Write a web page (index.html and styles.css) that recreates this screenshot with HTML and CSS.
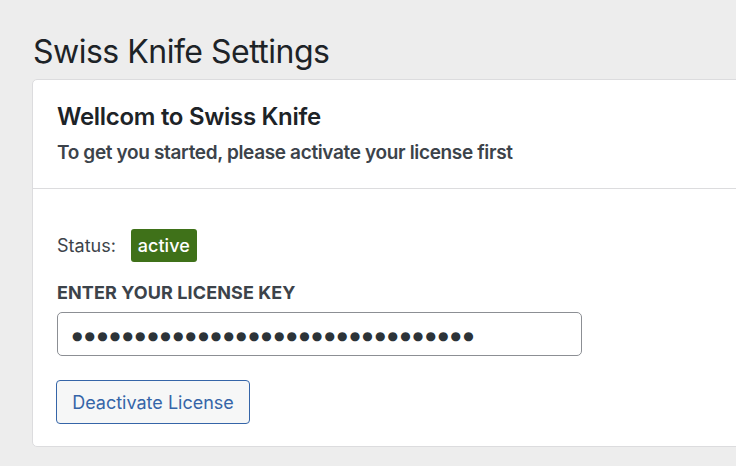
FILE: index.html
```html
<!DOCTYPE html>
<html>
<head>
<meta charset="utf-8">
<link rel="stylesheet" href="styles.css">
</head>
<body>
<div class="wrap">
  <h1 class="page-title">Swiss Knife Settings</h1>
  <div class="card">
    <div class="card-header">
      <h2 class="card-title">Wellcom to Swiss Knife</h2>
      <p class="card-sub">To get you started, please activate your license first</p>
    </div>
    <div class="card-body">
      <div class="status-row">
        <span class="status-label">Status:</span>
        <span class="badge">active</span>
      </div>
      <label class="field-label">ENTER YOUR LICENSE KEY</label>
      <div class="input"><span class="dots">●●●●●●●●●●●●●●●●●●●●●●●●●●●●●●●●</span></div>
      <button class="btn">Deactivate License</button>
    </div>
  </div>
</div>
</body>
</html>
```
FILE: styles.css
```css
html, body {
  margin: 0;
  padding: 0;
  background: #ededed;
  overflow: hidden;
  font-family: Inter, "Noto Sans", sans-serif;
  color: #1d2327;
}
* {
  box-sizing: border-box;
}
.wrap {
  padding: 32px 0 0 32px;
  width: 760px;
}
.page-title {
  margin: 0 0 7px 1px;
  font-size: 32px;
  font-weight: 400;
  letter-spacing: -0.5px;
  line-height: 40px;
  color: #1d2327;
}
.card {
  background: #fff;
  border: 1px solid #dcdcde;
  border-radius: 5px;
}
.card-header {
  padding: 22px 24px 0;
  height: 109px;
  border-bottom: 1px solid #dcdcde;
}
.card-title {
  margin: 0;
  font-size: 24px;
  font-weight: 600;
  letter-spacing: -0.3px;
  line-height: 30px;
  color: #1d2327;
}
.card-sub {
  margin: 9px 0 0;
  font-size: 19px;
  font-weight: 600;
  letter-spacing: -0.35px;
  line-height: 24px;
  color: #3c434a;
}
.card-body {
  padding: 40px 24px 22px;
  display: flex;
  flex-direction: column;
  align-items: flex-start;
}
.status-row {
  display: flex;
  align-items: center;
  gap: 15px;
}
.status-label {
  font-size: 18px;
  color: #3c434a;
}
.badge {
  background: #3f7119;
  color: #fff;
  font-size: 18px;
  font-weight: 500;
  border-radius: 3px;
  padding: 0 7px;
  height: 33px;
  line-height: 33px;
}
.field-label {
  margin-top: 20px;
  font-size: 18px;
  font-weight: 700;
  letter-spacing: 0.1px;
  color: #3c434a;
  line-height: 22px;
}
.input {
  margin-top: 8px;
  width: 525px;
  height: 44px;
  border: 1px solid #8c8f94;
  border-radius: 5px;
  padding: 3px 12px 0 14px;
  display: flex;
  align-items: center;
}
.dots {
  font-family: "DejaVu Sans", sans-serif;
  font-size: 12px;
  letter-spacing: 2.15px;
  color: #2c3338;
}
.btn {
  margin: 24px 0 0 -1px;
  height: 44px;
  width: 194px;
  padding: 0;
  background: #f6f7f7;
  border: 1px solid #3565a8;
  border-radius: 4px;
  color: #3565a8;
  font-family: Inter, "Noto Sans", sans-serif;
  font-size: 18px;
  font-weight: 400;
}
```
